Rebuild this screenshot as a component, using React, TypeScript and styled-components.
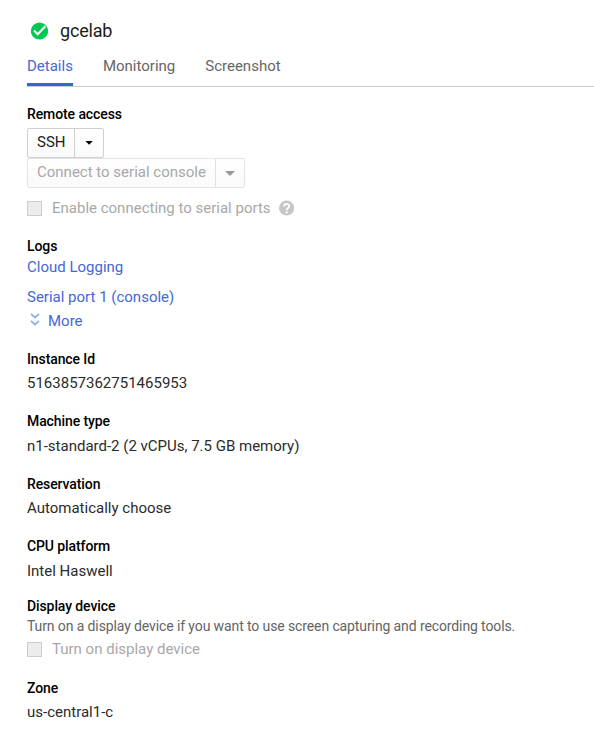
import React from 'react';
import styled, { createGlobalStyle } from 'styled-components';

const GlobalStyle = createGlobalStyle`
  * { box-sizing: border-box; }
  body {
    margin: 0;
    background: #fff;
    color: #2b2b2b;
    font: 400 15px/20px Roboto, sans-serif;
  }
`;

const Page = styled.main`
  height: 733px;
  padding-left: 27px;
  overflow: hidden;
  white-space: nowrap;
`;

const Header = styled.header`
  display: flex;
  align-items: center;
  gap: 12px;
  height: 24px;
  margin-top: 19px;
  padding-left: 4px;
`;

const InstanceName = styled.h1`
  margin: 0;
  color: #1c1c1c;
  font-size: 18px;
  font-weight: 400;
  letter-spacing: -0.2px;
  line-height: 24px;
`;

const Tabs = styled.nav`
  display: flex;
  gap: 30px;
  height: 44px;
  border-bottom: 1px solid #ccc;
`;

const Tab = styled.a<{ $active?: boolean }>`
  height: 43px;
  padding-top: 13px;
  border-bottom: 3px solid ${p => (p.$active ? '#3367d6' : 'transparent')};
  color: ${p => (p.$active ? '#4468d6' : '#666')};
`;

const Section = styled.section<{ $top: number }>`
  display: flex;
  flex-direction: column;
  align-items: flex-start;
  margin-top: ${p => p.$top}px;
`;

const Title = styled.h2`
  margin: 0;
  color: #000;
  font-size: 14px;
  font-weight: 500;
  letter-spacing: -0.1px;
  line-height: 20px;
`;

const Value = styled.div<{ $gap: number }>`
  margin-top: ${p => p.$gap}px;
  height: 20px;
`;

const Hint = styled.p`
  margin: 0;
  color: #646464;
  font-size: 14px;
  letter-spacing: -0.11px;
`;

const Link = styled.a<{ $gap: number }>`
  display: flex;
  align-items: center;
  margin-top: ${p => p.$gap}px;
  height: 20px;
  color: #4468d6;
`;

const MoreIcon = styled.svg`
  margin: -3px 8px 0 3px;
`;

const SplitButton = styled.div<{ $disabled?: boolean; $gap?: number }>`
  display: flex;
  height: 30px;
  margin-top: ${p => p.$gap ?? 0}px;
  border: 1px solid ${p => (p.$disabled ? '#e4e4e4' : '#d0d0d0')};
  border-radius: 2px;
  background: linear-gradient(#fff, #fafafa);
  color: ${p => (p.$disabled ? '#a8a8a8' : '#1c1c1c')};
`;

const ButtonLabel = styled.span<{ $width: number }>`
  width: ${p => p.$width}px;
  padding: 3px 0 0 9px;
`;

const ButtonArrow = styled.span<{ $disabled?: boolean }>`
  display: flex;
  align-items: center;
  justify-content: center;
  width: 29px;
  border-left: 1px solid ${p => (p.$disabled ? '#e0e0e0' : '#d0d0d0')};
`;

const CheckRow = styled.label<{ $gap: number }>`
  display: flex;
  align-items: center;
  height: 20px;
  margin-top: ${p => p.$gap}px;
  color: #a8a8a8;
`;

const Box = styled.span`
  width: 15px;
  height: 15px;
  margin-right: 10px;
  border: 1px solid #cdcdcd;
  background: #ececec;
`;

const HelpIcon = styled.svg`
  margin-left: 8px;
`;

const Caret = ({ wide, color }: { wide?: boolean; color: string }) => (
  <svg width="10" height="6" viewBox="0 0 10 6">
    <path d={wide ? 'M0 1h10L5 6z' : 'M1.4 1h7.4L5.1 4.8z'} fill={color} />
  </svg>
);

const fields = [
  { title: 'Instance Id', value: '5163857362751465953', top: 18, gap: 4 },
  { title: 'Machine type', value: 'n1-standard-2 (2 vCPUs, 7.5 GB memory)', top: 18, gap: 5 },
  { title: 'Reservation', value: 'Automatically choose', top: 18, gap: 4 },
  { title: 'CPU platform', value: 'Intel Haswell', top: 18, gap: 5 },
];

export default function App() {
  return (
    <>
      <GlobalStyle />
      <Page>
        <Header>
          <svg width="17" height="18" viewBox="0 0 17 18">
            <circle cx="8.5" cy="9" r="8.6" fill="#00c853" />
            <path d="M3 8.6l3.7 3.6 7.6-8" fill="none" stroke="#fff" strokeWidth="2.1" />
          </svg>
          <InstanceName>gcelab</InstanceName>
        </Header>
        <Tabs>
          <Tab $active>Details</Tab>
          <Tab>Monitoring</Tab>
          <Tab>Screenshot</Tab>
        </Tabs>
        <Section $top={17}>
          <Title>Remote access</Title>
          <SplitButton $gap={4}>
            <ButtonLabel $width={46}>SSH</ButtonLabel>
            <ButtonArrow><Caret color="#000" /></ButtonArrow>
          </SplitButton>
          <SplitButton $disabled>
            <ButtonLabel $width={187}>Connect to serial console</ButtonLabel>
            <ButtonArrow $disabled><Caret wide color="#999" /></ButtonArrow>
          </SplitButton>
          <CheckRow $gap={10}>
            <Box />
            Enable connecting to serial ports
            <HelpIcon width="16" height="16" viewBox="0.4 0 16 16">
              <circle cx="8" cy="8" r="7.6" fill="#c6c6c6" />
              <path d="M5.4 6.4C5.4 2.9 10.7 3.1 10.7 6.2C10.7 8 8.1 8 8.1 10.2" fill="none" stroke="#fff" strokeWidth="1.8" />
              <rect x="7.1" y="11.4" width="1.9" height="1.9" fill="#fff" />
            </HelpIcon>
          </CheckRow>
        </Section>
        <Section $top={18}>
          <Title>Logs</Title>
          <Link $gap={1}>Cloud Logging</Link>
          <Link $gap={10}>Serial port 1 (console)</Link>
          <Link $gap={4}>
            <MoreIcon width="10" height="13" viewBox="0 0 10 13">
              <path d="M1 1l4 3.5L9 1M1 8l4 3.5L9 8" fill="none" stroke="#8fb0ee" strokeWidth="1.7" />
            </MoreIcon>
            More
          </Link>
        </Section>
        {fields.map(f => (
          <Section key={f.title} $top={f.top}>
            <Title>{f.title}</Title>
            <Value $gap={f.gap}>{f.value}</Value>
          </Section>
        ))}
        <Section $top={15}>
          <Title>Display device</Title>
          <Hint>Turn on a display device if you want to use screen capturing and recording tools.</Hint>
          <CheckRow $gap={3}>
            <Box />
            Turn on display device
          </CheckRow>
        </Section>
        <Section $top={19}>
          <Title>Zone</Title>
          <Value $gap={4}>us-central1-c</Value>
        </Section>
      </Page>
    </>
  );
}
